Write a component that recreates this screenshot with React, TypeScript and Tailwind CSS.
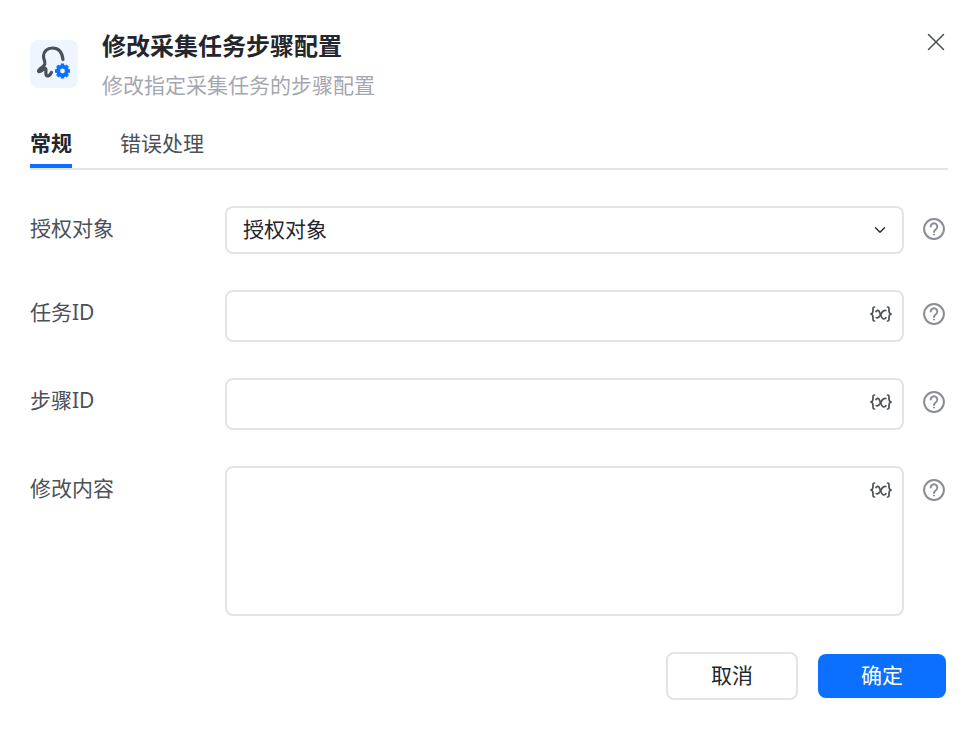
import { ChevronDown, X } from "lucide-react";

const font = "font-['Noto_Sans','Noto_Sans_CJK_SC',sans-serif]";

function HelpIcon() {
  return (
    <svg width="24" height="24" viewBox="0 0 24 24" fill="none" stroke="#8a8d96" strokeWidth="2" strokeLinecap="round">
      <circle cx="12" cy="12" r="9.900" />
      <path d="M8.700 9.600a3.300 3.300 0 1 1 5.200 2.700c-1.200.8-1.900 1.400-1.900 2.700" />
      <circle cx="12" cy="17.600" r="0.600" fill="#8a8d96" strokeWidth="1" />
    </svg>
  );
}

function VarIcon() {
  return (
    <svg width="22" height="16" viewBox="0 0 22 16" fill="none" stroke="#4b5059" strokeWidth="1.700" strokeLinecap="round">
      <path d="M4.500 1C2.800 1 3 2.500 3 4.500c0 2-.4 3-1.800 3.500C2.600 8.500 3 9.500 3 11.500c0 2-.2 3.500 1.500 3.500" />
      <path d="M17.500 1c1.700 0 1.500 1.500 1.500 3.500 0 2 .4 3 1.800 3.500-1.400.5-1.800 1.500-1.800 3.500 0 2 .2 3.500-1.500 3.500" />
      <path d="M6 5.500C7 3.800 8.800 4 9.700 6.500c1 3 1.800 6.500 4.300 6.500 1 0 1.600-.5 2-1.300" />
      <path d="M15.800 4.500c-2-.5-3.300.8-4.600 3.200C10 10.200 8.600 12.500 6.300 11.800" />
    </svg>
  );
}

function AppIcon() {
  return (
    <div className="flex h-12 w-12 shrink-0 items-center justify-center rounded-lg bg-[#eff5fe]">
      <svg width="48" height="48" viewBox="0 0 48 48" fill="none">
        <path
          d="M33 19.500C32 11 27.500 8 22.500 8c-5.500 0-9 3.700-9 8.200 0 3.500 2 5.500 1.300 8-.5 2-3.800 3.500-6 6-.8 1 .2 1.800 1.500 1.200 1.800-.8 3.500-3.200 5-3 1.500.3 0 4.500.8 6.500 1 2.200 4 .8 5.400-2.500"
          stroke="#4a4f5a"
          strokeWidth="3.200"
          strokeLinecap="round"
          strokeLinejoin="round"
        />
        <circle cx="32.500" cy="31" r="4.300" stroke="#0b6fff" strokeWidth="3.800" />
        <path
          d="M32.500 23.500v3M32.500 35.500v3M25 31h3M37 31h3M27.200 25.700l2.100 2.100M35.700 34.200l2.100 2.100M37.800 25.700l-2.100 2.100M29.300 34.200l-2.100 2.100"
          stroke="#0b6fff"
          strokeWidth="3.400"
        />
      </svg>
    </div>
  );
}

const inputBox = "relative w-[679px] rounded-lg border-2 border-[#e3e4e9] bg-white";

function FieldRow({ label, boxClass, top = "mt-[12px]" }: { label: string; boxClass: string; top?: string }) {
  return (
    <div className="flex items-start">
      <label className="h-[46px] w-[195px] shrink-0 text-[21px] leading-[44px] text-[#4b5059]">{label}</label>
      <div className={`${inputBox} ${boxClass}`}>
        <span className="absolute right-[10px] top-[14px]">
          <VarIcon />
        </span>
      </div>
      <div className={`ml-[18px] ${top}`}>
        <HelpIcon />
      </div>
    </div>
  );
}

export default function App() {
  return (
    <div className={`relative h-[730px] w-[978px] bg-white px-[30px] ${font}`}>
      <button className="absolute right-[27px] top-[27px] text-[#4b5059]">
        <X size={30} strokeWidth={1.2} />
      </button>

      <div className="flex items-start gap-6 pt-[30px]">
        <div className="pt-[10px]">
          <AppIcon />
        </div>
        <div>
          <h2 className="text-[24px] font-bold leading-[32px] text-[#23262c]">修改采集任务步骤配置</h2>
          <p className="mt-[8px] text-[21px] leading-[30px] text-[#a4a7b0]">修改指定采集任务的步骤配置</p>
        </div>
      </div>

      <div className="mt-[28px] flex h-[40px] gap-12 border-b-2 border-[#e3e4e9] box-content">
        <div className="h-[40px] border-b-4 border-[#0b6fff] text-[21px] font-bold leading-[30px] text-[#23262c]">常规</div>
        <div className="text-[21px] leading-[30px] text-[#4b5059]">错误处理</div>
      </div>

      <div className="mt-[36px] flex flex-col gap-9">
        <div className="flex items-start">
          <label className="h-[46px] w-[195px] shrink-0 text-[21px] leading-[44px] text-[#4b5059]">授权对象</label>
          <div className={`${inputBox} flex h-12 items-center justify-between pl-[16px] pr-[13px]`}>
            <span className="text-[21px] text-[#23262c]">授权对象</span>
            <ChevronDown size={18} strokeWidth={1.8} className="text-[#23262c]" />
          </div>
          <div className="ml-[18px] mt-[11px]">
            <HelpIcon />
          </div>
        </div>
        <FieldRow label="任务ID" boxClass="h-[52px]" />
        <FieldRow label="步骤ID" boxClass="h-[52px]" />
        <FieldRow label="修改内容" boxClass="h-[150px]" />
      </div>

      <div className="mt-[36px] mr-[2px] flex items-center justify-end gap-5">
        <button className="h-12 w-[132px] rounded-lg border-2 border-[#e3e4e9] bg-white text-[21px] text-[#23262c]">取消</button>
        <button className="h-11 w-[128px] rounded-lg bg-[#0b6fff] text-[21px] text-white">确定</button>
      </div>
    </div>
  );
}
